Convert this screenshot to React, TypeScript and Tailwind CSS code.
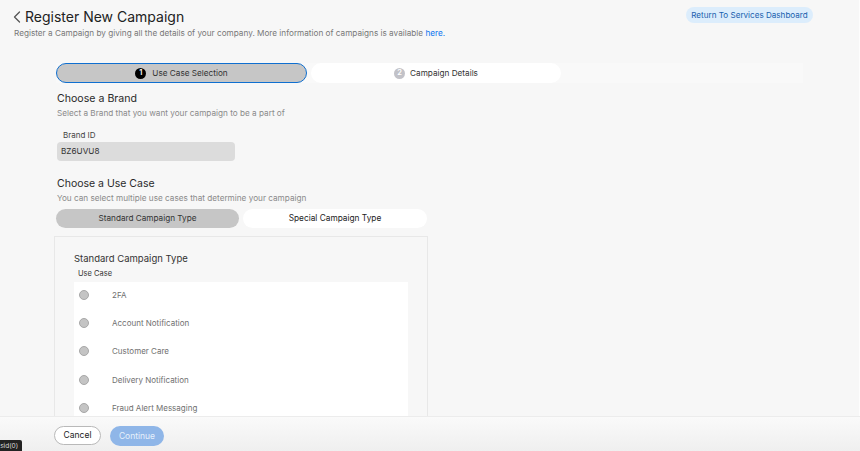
import { ChevronLeft } from "lucide-react";

const useCases = ["2FA", "Account Notification", "Customer Care", "Delivery Notification", "Fraud Alert Messaging"];

const App = () => {
  return (
    <div className="relative flex h-[451px] w-[860px] flex-col overflow-hidden bg-[#f7f7f7] font-['Inter',sans-serif] text-[#1f1f1f]">
      <div className="min-h-0 flex-1 overflow-hidden border-r border-[#fdfdfd] pl-[14px]">
        <div className="flex items-start justify-between pt-[7px] pr-[46px]">
          <div>
            <div className="flex h-[19px] items-center">
              <ChevronLeft className="-ml-[7px] -mr-[2px] h-[20px] w-[20px] text-[#555]" strokeWidth={1.5} />
              <h1 className="text-[14px] leading-[19px] font-normal text-[#222]">Register New Campaign</h1>
            </div>
            <p className="mt-[1px] text-[8.2px] leading-[12px] text-[#777]">
              Register a Campaign by giving all the details of your company. More information of campaigns is available{" "}
              <a className="text-[#0a74f0]">here.</a>
            </p>
          </div>
          <button className="h-[16px] w-[127px] rounded-full bg-[#dcedfc] text-[8.1px] leading-[16px] text-[#1a5fae]">
            Return To Services Dashboard
          </button>
        </div>

        <div className="mt-[24px] ml-[42px]">
          <div className="flex h-[20px] w-[747px] bg-[#f9f9f9]">
            <div className="flex w-[251px] items-center justify-center rounded-full border border-[#0f6fd0] bg-[#c6c6c6] text-[8.2px] text-[#333]">
              <span className="mr-[6px] flex h-[11px] w-[11px] items-center justify-center rounded-full bg-black text-[7.5px] font-semibold text-white">1</span>
              Use Case Selection
            </div>
            <div className="ml-[4px] flex w-[250px] items-center justify-center rounded-full bg-white text-[8.2px] text-[#333]">
              <span className="mr-[5px] flex h-[11px] w-[11px] items-center justify-center rounded-full bg-[#c2c2c8] text-[7.5px] font-semibold text-white">2</span>
              Campaign Details
            </div>
          </div>

          <h2 className="mt-[9px] ml-[1px] text-[10.6px] leading-[14px] font-normal text-[#2a2a2a]">Choose a Brand</h2>
          <p className="mt-[1px] ml-[1px] text-[8.2px] leading-[12px] text-[#8a8a8a]">Select a Brand that you want your campaign to be a part of</p>
          <div className="mt-[11px] ml-[7px] text-[8px] leading-[10px] text-[#444]">Brand ID</div>
          <div className="mt-[2px] ml-[1px] flex h-[19px] w-[178px] items-center rounded-[4px] bg-[#dcdcdc] pl-[4px] text-[8.2px] text-[#333]">BZ6UVU8</div>

          <h2 className="mt-[16px] ml-[1px] text-[10.5px] leading-[14px] font-normal text-[#2a2a2a]">Choose a Use Case</h2>
          <p className="mt-[1px] ml-[1px] text-[8.2px] leading-[12px] text-[#8a8a8a]">You can select multiple use cases that determine your campaign</p>

          <div className="mt-[5px] flex h-[19px] w-[371px] gap-[4px]">
            <div className="flex w-[183px] items-center justify-center rounded-full bg-[#c6c6c6] text-[8.2px] text-[#333]">Standard Campaign Type</div>
            <div className="flex w-[184px] items-center justify-center rounded-full bg-white text-[8.3px] text-[#222]">Special Campaign Type</div>
          </div>

          <div className="mt-[8px] -ml-[2px] h-[200px] w-[374px] border border-[#e8e8e8] bg-[#f7f7f7] pt-[15px] pl-[19px]">
            <h3 className="text-[9.5px] leading-[14px] font-normal text-[#333]">Standard Campaign Type</h3>
            <div className="mt-[3px] ml-[4px] text-[7.5px] leading-[10px] text-[#333]">Use Case</div>
            <ul className="mt-[3px] w-[334px] bg-white pl-[5px]">
              {useCases.map((name) => (
                <li key={name} className="flex h-[28.2px] items-center pb-[2px]">
                  <span className="h-[10px] w-[10px] rounded-full border border-[#a8a8a8] bg-[#c4c4c4]" />
                  <span className="ml-[23px] text-[8px] text-[#707070]">{name}</span>
                </li>
              ))}
            </ul>
          </div>
        </div>
      </div>

      <footer className="z-10 flex h-[35px] shrink-0 items-start gap-[9px] border-t border-[#ececec] bg-gradient-to-b from-[#fafafa] to-[#efefef] pt-[9px] pl-[54px]">
        <button className="h-[19px] w-[47px] rounded-full border border-[#b9b9b9] bg-white text-[8.5px] text-[#222]">Cancel</button>
        <button className="h-[20px] w-[54px] rounded-full bg-[#8fb6e8] text-[8.5px] text-[#e6f0fb]">Continue</button>
      </footer>

      <div className="absolute bottom-0 left-0 z-20 h-[11px] w-[22px] overflow-hidden rounded-tr-[2px] bg-[#222] pr-[4px] text-right text-[6.5px] leading-[12px] whitespace-nowrap text-[#ddd]">
        sid(0)
      </div>
    </div>
  );
};

export default App;
